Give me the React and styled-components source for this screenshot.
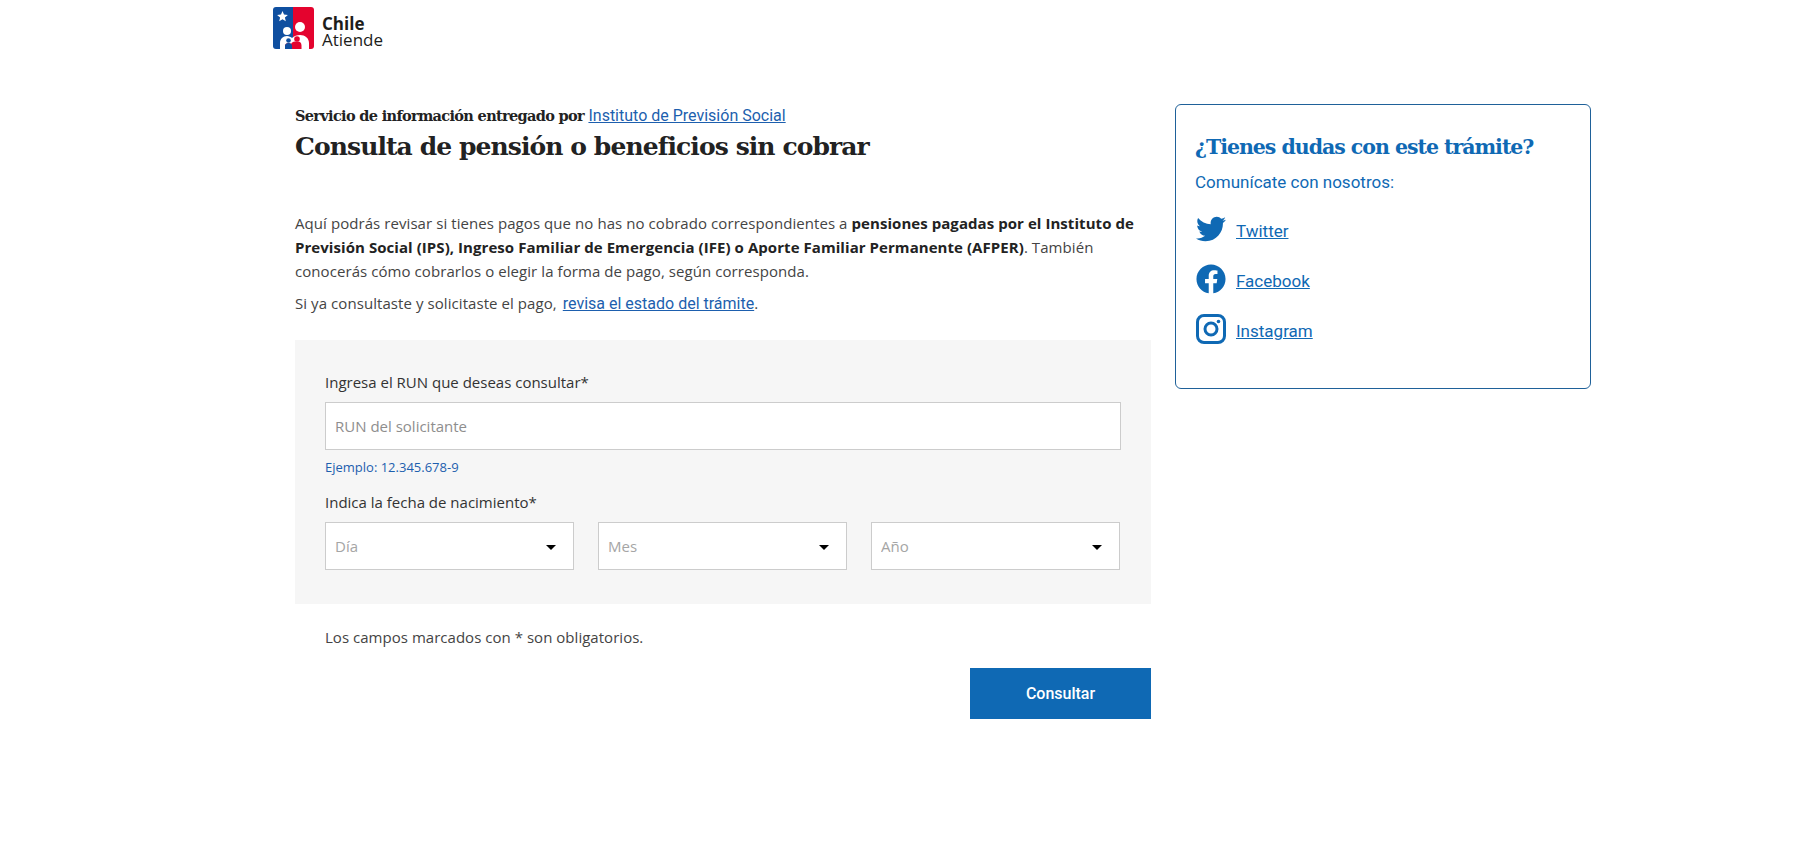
import React from 'react';
import styled, { createGlobalStyle } from 'styled-components';
import { FaTwitter, FaFacebook } from 'react-icons/fa';

const GlobalStyle = createGlobalStyle`
  html, body {
    margin: 0;
    padding: 0;
    background: #fff;
  }
  body {
    font-family: 'Open Sans', 'Liberation Sans', sans-serif;
    color: #333;
  }
  * {
    box-sizing: border-box;
  }
`;

const Page = styled.div`
  height: 845px;
  overflow: hidden;
`;

const Header = styled.header`
  display: flex;
  align-items: flex-start;
  gap: 8px;
  padding: 7px 0 0 273px;
  height: 104px;
`;

const LogoText = styled.div`
  display: flex;
  flex-direction: column;
  margin-top: 9px;
  font-size: 17px;
  line-height: 16px;
  color: #1d1d1b;
  b {
    font-weight: 700;
  }
`;

const Main = styled.main`
  display: grid;
  grid-template-columns: 856px 416px;
  gap: 24px;
  padding-left: 295px;
  align-items: start;
`;

const Intro = styled.section`
  padding-top: 2px;
`;

const Provider = styled.div`
  font-family: 'DejaVu Serif', serif;
  font-weight: 700;
  font-size: 14.5px;
  letter-spacing: -0.67px;
  line-height: 20px;
  color: #222;
  a {
    font-family: Roboto, sans-serif;
    font-weight: 400;
    font-size: 16px;
    letter-spacing: 0;
    color: #1d5fae;
  }
`;

const Title = styled.h1`
  margin: 4px 0 47px;
  font-family: 'DejaVu Serif', serif;
  font-weight: 700;
  font-size: 25px;
  letter-spacing: -0.92px;
  line-height: 34px;
  color: #222;
`;

const Paragraph = styled.p`
  margin: 0 0 8px;
  font-size: 15px;
  letter-spacing: 0.07px;
  line-height: 24px;
  color: #444;
  b {
    color: #222;
    font-weight: 700;
    letter-spacing: 0.06px;
  }
  a {
    font-family: Roboto, sans-serif;
    font-size: 16px;
    letter-spacing: 0;
    margin-left: 2px;
    color: #1d5fae;
  }
`;

const FormPanel = styled.form`
  margin-top: 24px;
  padding: 32px 30px 34px;
  background: #f6f6f6;
`;

const Label = styled.label`
  display: block;
  font-size: 15px;
  line-height: 20px;
  color: #333;
`;

const TextInput = styled.input`
  display: block;
  width: 100%;
  height: 48px;
  margin-top: 10px;
  padding: 0 9px;
  border: 1px solid #ccc;
  border-radius: 0;
  background: #fff;
  font-family: inherit;
  font-size: 15px;
  &::placeholder {
    color: #8e8e8e;
    opacity: 1;
  }
`;

const Hint = styled.div`
  margin: 9px 0 17px;
  font-size: 13px;
  line-height: 16px;
  color: #1d5fae;
`;

const SelectRow = styled.div`
  display: grid;
  grid-template-columns: repeat(3, 1fr);
  gap: 24px;
  margin-top: 10px;
  padding-right: 1px;
`;

const SelectBox = styled.div`
  position: relative;
  &::after {
    content: '';
    position: absolute;
    right: 18px;
    top: 23px;
    border-style: solid;
    border-width: 5px 5px 0;
    border-color: #000 transparent transparent;
  }
`;

const Select = styled.select`
  display: block;
  width: 100%;
  height: 48px;
  padding: 0 9px;
  appearance: none;
  border: 1px solid #ccc;
  border-radius: 0;
  background: #fff;
  font-family: inherit;
  font-size: 15px;
  color: #a5a5a5;
`;

const Note = styled.p`
  margin: 23px 0 21px 30px;
  font-size: 15px;
  letter-spacing: 0.03px;
  line-height: 20px;
  color: #444;
`;

const Actions = styled.div`
  display: flex;
  justify-content: flex-end;
`;

const SubmitButton = styled.button`
  width: 181px;
  height: 51px;
  border: 0;
  background: #0f69b4;
  color: #fff;
  font-family: Roboto, sans-serif;
  font-weight: 500;
  font-size: 16px;
`;

const HelpCard = styled.aside`
  height: 285px;
  padding: 27px 19px 0;
  border: 1px solid #1f6199;
  border-radius: 6px;
  color: #0f69b4;
`;

const HelpTitle = styled.h2`
  margin: 0;
  font-family: 'DejaVu Serif', serif;
  font-weight: 700;
  font-size: 20.5px;
  letter-spacing: -1.03px;
  line-height: 30px;
`;

const HelpText = styled.p`
  margin: 10px 0 22px;
  font-family: Roboto, sans-serif;
  font-size: 17px;
  line-height: 20px;
`;

const SocialList = styled.div`
  display: flex;
  flex-direction: column;
  gap: 20px;
`;

const SocialRow = styled.div`
  display: flex;
  align-items: center;
  gap: 10px;
  height: 30px;
  padding-left: 1px;
  svg {
    display: block;
    flex: none;
    width: 30px;
    height: 30px;
    fill: #0f69b4;
  }
  a {
    font-family: Roboto, sans-serif;
    font-size: 17px;
    color: #0f69b4;
    position: relative;
    top: 2px;
  }
`;

function Logo() {
  return (
    <svg width="41" height="42" viewBox="0 0 41 42">
      <path d="M3 0h17v42H3a3 3 0 0 1-3-3V3a3 3 0 0 1 3-3z" fill="#0f4fa0" />
      <path d="M20 0h18a3 3 0 0 1 3 3v36a3 3 0 0 1-3 3H20z" fill="#e4032e" />
      <path d="M9.500 4l1.500 3.600 3.900.3-3 2.500.9 3.800-3.300-2-3.300 2 .9-3.800-3-2.500 3.900-.3z" fill="#fff" />
      <circle cx="27" cy="20" r="5" fill="#fff" />
      <circle cx="14" cy="24" r="4" fill="#fff" />
      <path d="M7 42v-6c0-4 3-7 7-7 2 0 4 1 5 2 2-2 5-3 8-3 5 0 9 3 9 8v6z" fill="#fff" />
      <circle cx="15.500" cy="33.500" r="2.300" fill="#0f4fa0" />
      <circle cx="24" cy="32" r="2.800" fill="#e4032e" />
      <path d="M12 42v-3c0-2 1.500-3 3.500-3 1 0 2 .3 2.500 1 .8-1.500 2-2.500 4-2.500h3c2 0 3.500 1.500 3.500 4v3.500z" fill="#e4032e" />
      <path d="M12 42v-3c0-2 1.500-3 3.500-3s3.500 1 3.500 3v3z" fill="#0f4fa0" />
    </svg>
  );
}

function InstagramIcon() {
  return (
    <svg viewBox="0 0 30 30">
      <rect x="1.500" y="1.500" width="27" height="27" rx="6.500" fill="none" stroke="#0f69b4" strokeWidth="3" />
      <circle cx="15" cy="15" r="6" fill="none" stroke="#0f69b4" strokeWidth="3" />
      <circle cx="22.500" cy="7.500" r="1.800" />
    </svg>
  );
}

const socials = [
  { name: 'Twitter', icon: <FaTwitter /> },
  { name: 'Facebook', icon: <FaFacebook /> },
  { name: 'Instagram', icon: <InstagramIcon /> },
];

export default function App() {
  return (
    <Page>
      <GlobalStyle />
      <Header>
        <Logo />
        <LogoText>
          <b>Chile</b>
          <span>Atiende</span>
        </LogoText>
      </Header>
      <Main>
        <div>
          <Intro>
            <Provider>
              Servicio de información entregado por <a href="#ips">Instituto de Previsión Social</a>
            </Provider>
            <Title>Consulta de pensión o beneficios sin cobrar</Title>
            <Paragraph>
              Aquí podrás revisar si tienes pagos que no has no cobrado correspondientes a{' '}
              <b>
                pensiones pagadas por el Instituto de Previsión Social (IPS), Ingreso Familiar de
                Emergencia (IFE) o Aporte Familiar Permanente (AFPER)
              </b>
              . También conocerás cómo cobrarlos o elegir la forma de pago, según corresponda.
            </Paragraph>
            <Paragraph>
              Si ya consultaste y solicitaste el pago, <a href="#estado">revisa el estado del trámite</a>.
            </Paragraph>
          </Intro>
          <FormPanel>
            <Label htmlFor="run">Ingresa el RUN que deseas consultar*</Label>
            <TextInput id="run" placeholder="RUN del solicitante" />
            <Hint>Ejemplo: 12.345.678-9</Hint>
            <Label>Indica la fecha de nacimiento*</Label>
            <SelectRow>
              {['Día', 'Mes', 'Año'].map((option) => (
                <SelectBox key={option}>
                  <Select defaultValue={option}>
                    <option>{option}</option>
                  </Select>
                </SelectBox>
              ))}
            </SelectRow>
          </FormPanel>
          <Note>Los campos marcados con * son obligatorios.</Note>
          <Actions>
            <SubmitButton type="button">Consultar</SubmitButton>
          </Actions>
        </div>
        <HelpCard>
          <HelpTitle>¿Tienes dudas con este trámite?</HelpTitle>
          <HelpText>Comunícate con nosotros:</HelpText>
          <SocialList>
            {socials.map((social) => (
              <SocialRow key={social.name}>
                {social.icon}
                <a href="#social">{social.name}</a>
              </SocialRow>
            ))}
          </SocialList>
        </HelpCard>
      </Main>
    </Page>
  );
}
